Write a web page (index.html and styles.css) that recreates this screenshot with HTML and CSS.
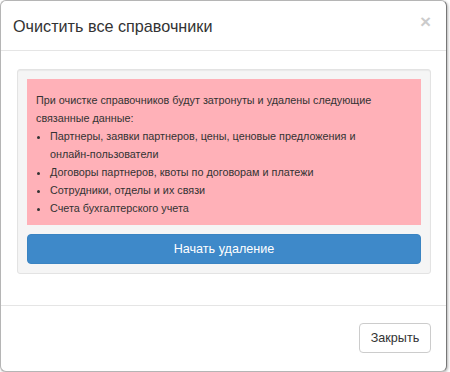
FILE: index.html
```html
<!DOCTYPE html>
<html lang="ru">
<head>
    <meta charset="UTF-8">
    <meta name="viewport" content="width=device-width, initial-scale=1.0">
    <title>Очистить все справочники</title>
    <link rel="stylesheet" href="styles.css">
</head>
<body>
    <div class="modal">
        <div class="modal-header">
            <h4 class="modal-title">Очистить все справочники</h4>
            <span class="close">&times;</span>
        </div>

        <div class="modal-body">
            <div class="well">
                <div class="alert">
                    <p>При очистке справочников будут затронуты и удалены следующие связанные данные:</p>
                    <ul>
                        <li>Партнеры, заявки партнеров, цены, ценовые предложения и <span class="nowrap">онлайн-пользователи</span></li>
                        <li>Договоры партнеров, квоты по договорам и платежи</li>
                        <li>Сотрудники, отделы и их связи</li>
                        <li>Счета бухгалтерского учета</li>
                    </ul>
                </div>
                <button class="btn btn-primary">Начать удаление</button>
            </div>
        </div>

        <div class="modal-footer">
            <button class="btn btn-default">Закрыть</button>
        </div>
    </div>
</body>
</html>
```

FILE: styles.css
```css
body {
    margin: 0;
    background: #fff;
    font-family: "Liberation Sans", Arial, sans-serif;
    color: #333;
}
.modal {
    width: 445px;
    height: 370px;
    border: 1px solid #b5b5b5;
    border-right-color: #777;
    border-radius: 6px;
    box-shadow: 1px 1px 3px rgba(0, 0, 0, 0.3);
    background: #fff;
    display: flex;
    flex-direction: column;
    box-sizing: content-box;
}
.modal-header {
    height: 49px;
    padding: 0 15px 0 12px;
    border-bottom: 1px solid #e5e5e5;
    display: flex;
    align-items: center;
    justify-content: space-between;
}
.modal-title {
    margin: 0;
    font-size: 16.2px;
    font-weight: normal;
    line-height: 20px;
    color: #333;
}
.close {
    font-size: 19px;
    font-weight: bold;
    color: #000;
    opacity: 0.2;
    line-height: 1;
    margin-top: -9px;
}
.modal-body {
    padding: 18px 15px 31px 16px;
    flex: 1;
}
.well {
    background: #f5f5f5;
    border: 1px solid #e3e3e3;
    border-radius: 3px;
    padding: 9px;
    box-shadow: inset 0 1px 1px rgba(0, 0, 0, 0.05);
}
.alert {
    background: #ffb1b8;
    padding: 12px 9px 8px 9px;
    font-size: 10.8px;
    line-height: 18px;
    color: #333;
}
.alert p {
    margin: 0;
}
.alert ul {
    margin: 0;
    padding-left: 14px;
}
.nowrap {
    white-space: nowrap;
}
.btn {
    font-family: inherit;
    font-size: 12.6px;
    height: 30px;
    border-radius: 4px;
    cursor: pointer;
}
.btn-primary {
    display: block;
    width: 100%;
    margin-top: 9px;
    background: #3e89c9;
    border: 1px solid #3a84c2;
    color: #fff;
}
.modal-footer {
    border-top: 1px solid #e5e5e5;
    padding: 17px 15px 0;
    height: 48px;
    display: flex;
    justify-content: flex-end;
    align-items: flex-start;
}
.btn-default {
    width: 72px;
    background: #fff;
    border: 1px solid #ccc;
    color: #333;
}
```
